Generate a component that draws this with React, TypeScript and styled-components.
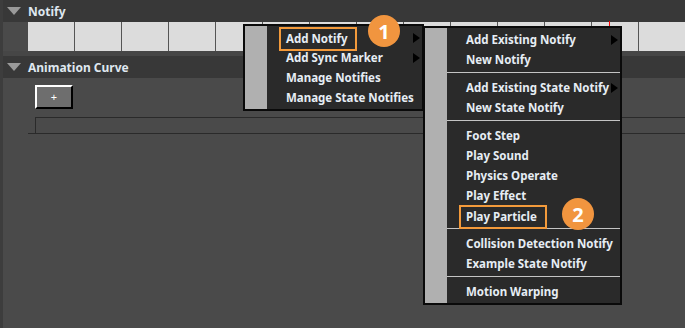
import styled, { createGlobalStyle } from "styled-components";

const GlobalStyle = createGlobalStyle`
  html, body {
    margin: 0;
    padding: 0;
    background: #4a4a4a;
  }
  body {
    font-family: "Noto Sans", "Liberation Sans", sans-serif;
  }
`;

const notifyMenu = ["Add Notify", "Add Sync Marker", "Manage Notifies", "Manage State Notifies"];

const addNotifyMenu: (string | null)[] = [
  "Add Existing Notify",
  "New Notify",
  null,
  "Add Existing State Notify",
  "New State Notify",
  null,
  "Foot Step",
  "Play Sound",
  "Physics Operate",
  "Play Effect",
  "Play Particle",
  null,
  "Collision Detection Notify",
  "Example State Notify",
  null,
  "Motion Warping",
];

const withArrow = ["Add Notify", "Add Sync Marker", "Add Existing Notify", "Add Existing State Notify"];
const highlighted = ["Add Notify", "Play Particle"];

const Triangle = () => (
  <svg width="14" height="8" viewBox="0 0 14 8">
    <path d="M0 0 L14 0 L7 8 Z" fill="#9a9a9a" />
  </svg>
);

const App = () => {
  return (
    <>
      <GlobalStyle />
      <Root>
        <Edge />
        <Content>
          <SectionHeader>
            <Triangle />
            <Title>Notify</Title>
          </SectionHeader>
          <Track>
            {Array.from({ length: 14 }).map((_, i) => (
              <Cell key={i} />
            ))}
            <Marker />
          </Track>
          <Gap />
          <SectionHeader>
            <Triangle />
            <Title>Animation Curve</Title>
          </SectionHeader>
          <CurveBody>
            <PlusButton>+</PlusButton>
            <CurveBox />
            <CurveLine />
          </CurveBody>
        </Content>

        <Menu $left={243} $top={24} $width={181}>
          <Strip />
          <Items>
            {notifyMenu.map((label) => (
              <Item key={label}>
                {highlighted.includes(label) ? <Highlight>{label}</Highlight> : label}
                {withArrow.includes(label) && <Arrow />}
              </Item>
            ))}
          </Items>
        </Menu>

        <Menu $left={423} $top={26} $width={199}>
          <Strip />
          <Items>
            {addNotifyMenu.map((label, i) =>
              label === null ? (
                <Separator key={i} />
              ) : (
                <Item key={label}>
                  {highlighted.includes(label) ? <Highlight>{label}</Highlight> : label}
                  {withArrow.includes(label) && <Arrow />}
                </Item>
              )
            )}
          </Items>
        </Menu>

        <Badge $x={384} $y={31}>1</Badge>
        <Badge $x={578} $y={214}>2</Badge>
      </Root>
    </>
  );
};

const Root = styled.div`
  position: relative;
  width: 685px;
  height: 328px;
  overflow: hidden;
  background: #4a4a4a;
  display: flex;
`;

const Edge = styled.div`
  width: 3px;
  background: #3d3d3d;
  flex-shrink: 0;
`;

const Content = styled.div`
  flex: 1;
  display: flex;
  flex-direction: column;
  min-width: 0;
`;

const SectionHeader = styled.div`
  height: 22px;
  background: #383838;
  display: flex;
  align-items: center;
  padding-left: 4px;
  gap: 7px;
  flex-shrink: 0;
`;

const Title = styled.span`
  color: #dfe7ef;
  font-size: 12px;
  font-weight: 700;
`;

const Track = styled.div`
  position: relative;
  height: 29px;
  margin-left: 25px;
  background: #dcdcdc;
  display: flex;
  flex-shrink: 0;
`;

const Cell = styled.div`
  width: 46px;
  flex-shrink: 0;
  border-right: 1px solid #555;
`;

const Marker = styled.div`
  position: absolute;
  left: 581px;
  top: -1px;
  width: 1px;
  height: 5px;
  background: #ff0000;
`;

const Gap = styled.div`
  height: 5px;
  background: #464646;
  flex-shrink: 0;
`;

const CurveBody = styled.div`
  display: flex;
  flex-direction: column;
  padding-top: 7px;
`;

const PlusButton = styled.div`
  margin-left: 32px;
  width: 34px;
  height: 20px;
  background: #6e6e6e;
  border-top: 2px solid #fff;
  border-left: 2px solid #fff;
  border-right: 2px solid #000;
  border-bottom: 2px solid #000;
  color: #fff;
  font-size: 11px;
  line-height: 20px;
  text-align: center;
`;

const CurveBox = styled.div`
  margin: 8px 0 0 32px;
  height: 15px;
  border: 1px solid #2a2a2a;
  border-bottom: none;
  border-right: none;
`;

const CurveLine = styled.div`
  margin-left: 25px;
  height: 1px;
  background: #2a2a2a;
`;

const Menu = styled.div<{ $left: number; $top: number; $width: number }>`
  position: absolute;
  left: ${(p) => p.$left}px;
  top: ${(p) => p.$top}px;
  width: ${(p) => p.$width}px;
  box-sizing: border-box;
  background: #2a2a2a;
  border: 2px solid #0a0a0a;
  display: flex;
`;

const Strip = styled.div`
  width: 22px;
  background: #b0b0b0;
  flex-shrink: 0;
`;

const Items = styled.div`
  flex: 1;
  display: flex;
  flex-direction: column;
  padding: 2px 0 1px;
`;

const Item = styled.div`
  position: relative;
  height: 20px;
  line-height: 20px;
  padding-left: 19px;
  color: #e6edf4;
  font-size: 11.5px;
  font-weight: 700;
  white-space: nowrap;
`;

const Highlight = styled.span`
  display: inline-block;
  line-height: 16px;
  padding: 2px 8px 2px 5px;
  margin: -4px 0 -4px -7px;
  border: 2px solid #f39a3b;
  vertical-align: middle;
`;

const Arrow = styled.span`
  position: absolute;
  right: 2px;
  top: 5px;
  width: 0;
  height: 0;
  border-top: 5px solid transparent;
  border-bottom: 5px solid transparent;
  border-left: 7px solid #000;
`;

const Separator = styled.div`
  height: 1px;
  margin: 2px 0 5px;
  background: #c4c4c4;
`;

const Badge = styled.div<{ $x: number; $y: number }>`
  position: absolute;
  left: ${(p) => p.$x - 16}px;
  top: ${(p) => p.$y - 16}px;
  width: 32px;
  height: 32px;
  border-radius: 50%;
  background: #f1953f;
  color: #fff;
  font-size: 20px;
  font-weight: 700;
  display: flex;
  align-items: center;
  justify-content: center;
`;

export default App;
